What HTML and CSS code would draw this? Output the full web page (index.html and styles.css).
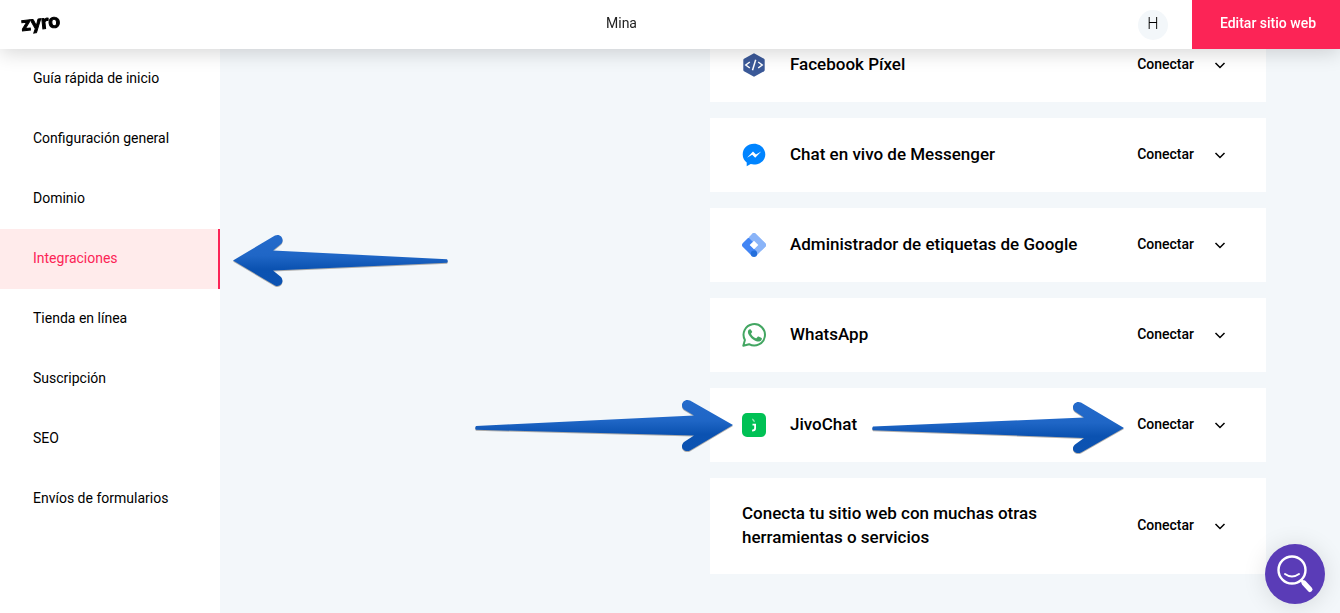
FILE: index.html
```html
<!DOCTYPE html>
<html lang="es">
<head>
<meta charset="utf-8">
<meta name="viewport" content="width=device-width, initial-scale=1">
<title>Zyro – Integraciones</title>
<link rel="stylesheet" href="styles.css">
</head>
<body>
<header class="topbar">
  <div class="topbar-start"><a class="logo" href="#">zyro</a></div>
  <div class="site-name">Mina</div>
  <div class="topbar-end">
    <button class="avatar" type="button">H</button>
    <a class="edit-site" href="#">Editar sitio web</a>
  </div>
</header>

<div class="layout">
  <nav class="sidebar">
    <a class="nav-item" href="#">Guía rápida de inicio</a>
    <a class="nav-item" href="#">Configuración general</a>
    <a class="nav-item" href="#">Dominio</a>
    <a class="nav-item nav-item-active" href="#">Integraciones</a>
    <a class="nav-item" href="#">Tienda en línea</a>
    <a class="nav-item" href="#">Suscripción</a>
    <a class="nav-item" href="#">SEO</a>
    <a class="nav-item" href="#">Envíos de formularios</a>
  </nav>

  <main class="content">
    <div class="cards">
      <section class="card">
        <svg class="card-icon" viewBox="0 0 24 24" aria-hidden="true">
          <path d="M12 .3 22 5.700Q22.700 6.200 22.700 7V17Q22.700 17.800 22 18.300L12 23.700 2 18.300Q1.300 17.800 1.300 17V7Q1.300 6.200 2 5.700Z" fill="#3b5998"/>
          <path d="M7.800 9 3.800 12 7.800 15M16.200 9l4 3-4 3M13.700 6.800l-3.200 10.400" fill="none" stroke="#fff" stroke-width="1.500"/>
        </svg>
        <h2 class="card-title">Facebook Píxel</h2>
        <button class="connect" type="button"><span class="connect-label">Conectar</span><svg class="chevron" viewBox="0 0 12 12" aria-hidden="true"><path d="M1.500 4 6 8.500 10.500 4"/></svg></button>
      </section>
      <section class="card">
        <svg class="card-icon" viewBox="0 0 24 24" aria-hidden="true">
          <path d="M12 .8C5.700.8.700 5.300.700 11.400c0 3.600 1.700 6.300 4 8.200V23.300l4-2.200c1 .3 2.200.5 3.300.5 6.300 0 11.300-4.400 11.300-10.200S18.300.8 12 .8Z" fill="#0084ff"/>
          <path d="M5 14.800 11 8.600l3 3 5.200-3-6 6.200-3-3Z" fill="#fff"/>
        </svg>
        <h2 class="card-title">Chat en vivo de Messenger</h2>
        <button class="connect" type="button"><span class="connect-label">Conectar</span><svg class="chevron" viewBox="0 0 12 12" aria-hidden="true"><path d="M1.500 4 6 8.500 10.500 4"/></svg></button>
      </section>
      <section class="card">
        <svg class="card-icon" viewBox="0 0 24 24" aria-hidden="true">
          <path d="M10.300.7Q12-.8 13.700.7L23.300 10.300Q24.800 12 23.300 13.700L14.500 22.500 9.500 18 15.700 12 8 5Z" fill="#8ab4f8"/>
          <path d="M6 5 9 4 15 9 8.300 12 14.500 18.300 10.300 23.300.7 13.700Q-.8 12 .7 10.300Z" fill="#4285f4"/>
          <path d="M10.300.7Q12-.8 13.700.7L23.300 10.300Q24.800 12 23.300 13.700L19.500 17.500 7.500 5.500 7 4Z" fill="#8ab4f8"/>
          <path d="M12 7.700 16.300 12 12 16.300 7.700 12Z" fill="#fff"/>
          <circle cx="12" cy="20.700" r="3.200" fill="#246fdb"/>
        </svg>
        <h2 class="card-title">Administrador de etiquetas de Google</h2>
        <button class="connect" type="button"><span class="connect-label">Conectar</span><svg class="chevron" viewBox="0 0 12 12" aria-hidden="true"><path d="M1.500 4 6 8.500 10.500 4"/></svg></button>
      </section>
      <section class="card">
        <svg class="card-icon" viewBox="0 0 24 24" aria-hidden="true">
          <path d="M1.300 22.700 2.900 17A10.700 10.700 0 1 1 7.100 21.200Z" fill="none" stroke="#43a662" stroke-width="2" stroke-linejoin="round"/>
          <path d="M8.900 6.800C8.600 6.200 8.300 6.200 7.900 6.200c-.9 0-2 1-2 2.800 0 1.600 1.200 3.200 1.400 3.500.2.200 2.400 3.800 5.900 5.200 2.900 1.100 3.500.9 4.100.8.700 0 2-.8 2.300-1.700.300-.8.300-1.500.2-1.700-.1-.2-.4-.3-.7-.4l-2.500-1.200c-.3-.1-.6-.1-.9.300l-1.100 1.300c-.2.200-.4.200-.8.100-.3-.2-1.500-.6-2.800-1.800-1-.9-1.800-2.100-1.900-2.400-.2-.4 0-.6.200-.8l.8-1c.1-.3.1-.5 0-.7Z" fill="#43a662"/>
        </svg>
        <h2 class="card-title">WhatsApp</h2>
        <button class="connect" type="button"><span class="connect-label">Conectar</span><svg class="chevron" viewBox="0 0 12 12" aria-hidden="true"><path d="M1.500 4 6 8.500 10.500 4"/></svg></button>
      </section>
      <section class="card">
        <svg class="card-icon" viewBox="0 0 24 24" aria-hidden="true">
          <rect width="24" height="24" rx="5" fill="#00c155"/>
          <path d="M10 5.500c1.800.6 2.700 1.700 2.800 3.700-1.600-.6-2.700-1.700-2.800-3.700Z" fill="#9be8b8"/>
          <path d="M10.500 11.700h2.600v3.600c0 1.600-.8 2.300-3 2.400" fill="none" stroke="#fff" stroke-width="1.800"/>
        </svg>
        <h2 class="card-title">JivoChat</h2>
        <button class="connect" type="button"><span class="connect-label">Conectar</span><svg class="chevron" viewBox="0 0 12 12" aria-hidden="true"><path d="M1.500 4 6 8.500 10.500 4"/></svg></button>
      </section>
      <section class="card">
        <h2 class="card-title">Conecta tu sitio web con muchas otras herramientas o servicios</h2>
        <button class="connect" type="button"><span class="connect-label">Conectar</span><svg class="chevron" viewBox="0 0 12 12" aria-hidden="true"><path d="M1.500 4 6 8.500 10.500 4"/></svg></button>
      </section>
    </div>
  </main>
</div>

<svg class="arrow arrow-menu" width="216" height="54" viewBox="0 0 216 54" aria-hidden="true">
  <defs>
    <linearGradient id="arrow-blue" x1="0" y1="0" x2="0" y2="54" gradientUnits="userSpaceOnUse">
      <stop offset="0" stop-color="#256bcb"/><stop offset=".4" stop-color="#1f66c6"/><stop offset=".65" stop-color="#0b52b1"/><stop offset="1" stop-color="#0c53b2"/>
    </linearGradient>
  </defs>
  <path d="M0 26.500 42 1.500C48-1 52 6 48 10L40 16.500 214 25.200Q215.500 27 214 28.800L40 36.500 48 43C52 48 47 54 42 51.500Z" fill="url(#arrow-blue)"/>
</svg>
<svg class="arrow arrow-card" width="258" height="54" viewBox="0 0 258 54" aria-hidden="true">
  <path d="M258 26 215 1.500C209-1 204 6 209 10.500L219 16.500 1 27Q-.5 29 1 30.800L219 36.500 209 43C204 48 209 54 215 51.500Z" fill="url(#arrow-blue)"/>
</svg>
<svg class="arrow arrow-connect" width="252" height="54" viewBox="0 0 252 54" aria-hidden="true">
  <path d="M252 27 209 1.500C203-1 198 6 203 10.500L212 16.500 1 25.500Q-.5 27.500 1 29.200L212 37 203 43.500C198 48 203 54 209 51.500Z" fill="url(#arrow-blue)"/>
</svg>

<button class="help" type="button" aria-label="Ayuda">
  <svg width="60" height="60" viewBox="0 0 60 60" fill="none" stroke="#fff" stroke-linecap="round" aria-hidden="true">
    <circle cx="27" cy="26" r="13.500" stroke-width="2.400"/>
    <path d="M20 30Q27 35 34 30" stroke-width="2"/>
    <path d="M36.500 36.500 38.500 38.500" stroke-width="3"/>
    <path d="M39 39 45 45.500" stroke-width="5"/>
  </svg>
</button>
</body>
</html>
```
FILE: styles.css
```css
* {
  box-sizing: border-box;
}

body {
  margin: 0;
  background: #f3f7fa;
  color: #000;
  font-family: Roboto, "Liberation Sans", sans-serif;
  font-size: 14px;
  line-height: 20px;
}

a {
  color: inherit;
  text-decoration: none;
}

button {
  border: 0;
  padding: 0;
  color: inherit;
  font: inherit;
  cursor: pointer;
}

.topbar {
  position: fixed;
  inset: 0 0 auto 0;
  z-index: 2;
  display: grid;
  grid-template-columns: 1fr auto 1fr;
  align-items: center;
  height: 49px;
  background: #fff;
  box-shadow: 0 4px 20px rgba(0, 0, 0, 0.16);
}

.topbar-start {
  padding: 0 0 6px 21px;
}

.logo {
  display: inline-block;
  font-family: Lato, sans-serif;
  font-size: 20px;
  font-weight: 900;
  line-height: 24px;
  transform: rotate(-6deg);
  -webkit-text-stroke: 1px #000;
}

.site-name {
  padding: 0 97px 3px 0;
  color: #222;
}

.topbar-end {
  display: flex;
  align-items: center;
  justify-content: flex-end;
  gap: 24px;
}

.avatar {
  width: 30px;
  height: 30px;
  padding-bottom: 2px;
  border-radius: 50%;
  background: #f3f7fa;
  font-size: 16px;
  font-weight: 300;
}

.edit-site {
  padding: 0 24px 2px 28px;
  background: #fc2456;
  color: #fff;
  font-weight: 500;
  line-height: 47px;
}

.layout {
  display: flex;
  min-height: 100vh;
}

.sidebar {
  flex: 0 0 220px;
  padding-top: 49px;
  background: #fff;
}

.nav-item {
  display: block;
  padding: 19px 32px 21px 33px;
}

.nav-item-active {
  border-right: 2px solid #fc2456;
  background: #ffebeb;
  color: #fc2456;
}

.content {
  flex: 1;
  display: grid;
  grid-template-columns: 416fr 556fr;
  align-items: start;
  padding: 28px 74px 32px;
}

.cards {
  grid-column: 2;
  display: grid;
  gap: 16px;
}

.card {
  display: flex;
  align-items: center;
  gap: 24px;
  min-height: 74px;
  padding: 23px 40px 23px 32px;
  background: #fff;
}

.card-icon {
  flex: none;
  width: 24px;
  height: 24px;
}

.card-title {
  flex: 1;
  margin: 0;
  padding-bottom: 2px;
  font-size: 17px;
  font-weight: 500;
  line-height: 24px;
}

.connect {
  display: flex;
  align-items: center;
  gap: 20px;
  background: none;
  font-weight: 500;
}

.connect-label {
  padding-bottom: 2px;
}

.chevron {
  width: 12px;
  height: 12px;
  fill: none;
  stroke: #000;
  stroke-width: 1.5;
}

.arrow {
  position: absolute;
  z-index: 1;
  filter: drop-shadow(0 1px 0 rgba(70, 60, 50, 0.4));
}

.arrow-menu {
  left: 233px;
  top: 234px;
}

.arrow-card {
  left: 475px;
  top: 399px;
}

.arrow-connect {
  left: 872px;
  top: 401px;
}

.help {
  position: fixed;
  right: 15px;
  bottom: 9px;
  width: 60px;
  height: 60px;
  border-radius: 50%;
  background: #5a3cb7;
  box-shadow: 0 2px 24px rgba(0, 0, 0, 0.12);
}
```
